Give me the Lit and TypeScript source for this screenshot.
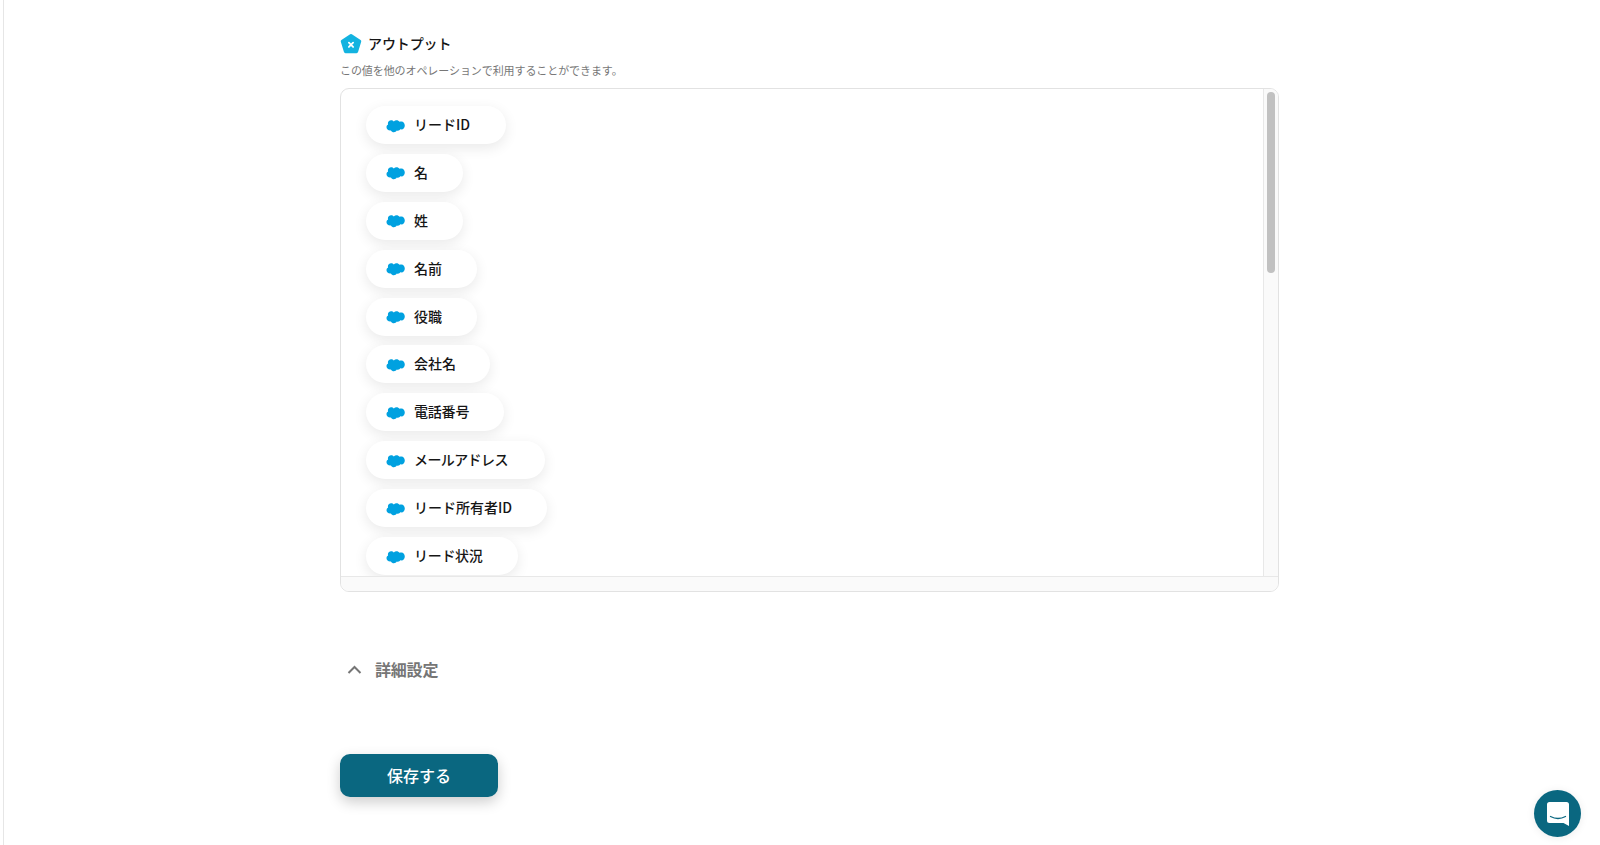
import { LitElement, html, css } from 'lit';
import { customElement } from 'lit/decorators.js';

const outputs: { label: string; width: number; spacing?: number }[] = [
  { label: 'リードID', width: 140 },
  { label: '名', width: 97 },
  { label: '姓', width: 97 },
  { label: '名前', width: 111 },
  { label: '役職', width: 111 },
  { label: '会社名', width: 124 },
  { label: '電話番号', width: 138, spacing: -0.2 },
  { label: 'メールアドレス', width: 179, spacing: -0.6 },
  { label: 'リード所有者ID', width: 181 },
  { label: 'リード状況', width: 152, spacing: -0.3 },
];

const cloud = html`<svg class="cloud" viewBox="0 0 19 14" aria-hidden="true">
  <path fill="#00a1e0" d="M7.800 2.400C8.500 1.600 9.500 1.200 10.500 1.200c1.300 0 2.400.6 3.100 1.600.6-.2 1.200-.4 1.800-.4 2 0 3.400 1.800 3.400 4s-1.400 4-3.400 4c-.3 0-.7 0-1-.1-.5.900-1.500 1.400-2.500 1.400-.4 0-.8-.1-1.100-.2-.6 1-1.700 1.700-2.900 1.700-1.300 0-2.400-.7-3-1.800-.3.100-.5.100-.8.100C2.100 11.500.5 10.200.5 8.300c0-1.200.6-2.200 1.600-2.700-.1-.4-.2-.8-.2-1.200C1.900 2.600 3.300 1.300 5.100 1.300c1.100 0 2.100.4 2.700 1.100z"/>
</svg>`;

@customElement('app-root')
export class AppRoot extends LitElement {
  static styles = css`
    :host {
      display: block;
      height: 845px;
      overflow: hidden;
      background: #fff;
      font-family: 'Noto Sans CJK JP', 'Noto Sans', sans-serif;
      color: #161616;
    }

    .page {
      box-sizing: border-box;
      height: 845px;
      margin-left: 3px;
      border-left: 1px solid #e6e6e6;
      padding: 32px 0 0 336px;
    }

    .heading {
      display: flex;
      align-items: center;
      gap: 6px;
      height: 22px;
      font-size: 14px;
      font-weight: 500;
      line-height: 22px;
    }

    .heading span {
      margin-top: -1px;
      letter-spacing: -0.1px;
    }

    .logo {
      width: 22px;
      height: 22px;
      display: block;
      margin-top: 2px;
    }

    .note {
      margin: 7px 0 9px;
      font-size: 11px;
      line-height: 18px;
      letter-spacing: -0.08px;
      color: #777;
    }

    .box {
      box-sizing: border-box;
      width: 939px;
      height: 504px;
      display: grid;
      grid-template-columns: 1fr 15px;
      grid-template-rows: 1fr 15px;
      border: 1px solid #e2e2e2;
      border-radius: 9px;
      overflow: hidden;
    }

    .list {
      overflow: hidden;
      padding: 17px 25px 0;
      display: flex;
      flex-direction: column;
      gap: 9.9px;
    }

    .chip {
      box-sizing: border-box;
      flex: none;
      height: 38px;
      display: flex;
      align-items: center;
      gap: 9px;
      padding-left: 20px;
      border-radius: 19px;
      background: #fff;
      box-shadow: 0 4px 14px rgba(0, 0, 0, 0.09);
      font-size: 14px;
      font-weight: 500;
      white-space: nowrap;
    }

    .chip span {
      margin-top: -2px;
    }

    .cloud {
      width: 19px;
      height: 14px;
      display: block;
      flex: none;
      margin-top: 1px;
    }

    .track-y {
      background: #fafafa;
      border-left: 1px solid #e8e8e8;
      padding: 3px 3px 0 3px;
    }

    .thumb {
      height: 181px;
      border-radius: 4px;
      background: #c1c1c1;
    }

    .track-x {
      grid-column: 1 / 3;
      background: #fafafa;
      border-top: 1px solid #e8e8e8;
    }

    .details {
      display: flex;
      align-items: center;
      gap: 13px;
      height: 24px;
      margin: 66px 0 0 7px;
      font-size: 16px;
      font-weight: 700;
      color: #767676;
    }

    .details span {
      margin-top: -2px;
      letter-spacing: -0.2px;
    }

    .chevron {
      width: 15px;
      height: 10px;
      display: block;
    }

    .save {
      display: block;
      width: 158px;
      height: 43px;
      margin-top: 72px;
      padding: 0 0 2px;
      border: none;
      border-radius: 10px;
      background: #0a6780;
      box-shadow: 0 5px 14px rgba(0, 0, 0, 0.2);
      color: #fff;
      font: 500 16px 'Noto Sans CJK JP', 'Noto Sans', sans-serif;
    }

    /* launcher floats over the page */
    .launcher {
      position: fixed;
      right: 19px;
      bottom: 8px;
      width: 47px;
      height: 47px;
      display: flex;
      align-items: center;
      justify-content: center;
      border-radius: 50%;
      background: #0a6780;
      box-shadow: 0 1px 8px rgba(0, 0, 0, 0.08);
    }

    .launcher svg {
      width: 24px;
      height: 26px;
      display: block;
    }
  `;

  render() {
    return html`
      <div class="page">
        <div class="heading">
          <svg class="logo" viewBox="0 0 21 21" aria-hidden="true">
            <path fill="#13b3e0" stroke="#13b3e0" stroke-width="3" stroke-linejoin="round" d="M10.500 2.500 18.800 8 15.800 17.800H5.200L2.200 8z"/>
            <path stroke="#fff" stroke-width="1.700" stroke-linecap="round" d="M8.500 9.300l4 4M12.500 9.300l-4 4"/>
          </svg>
          <span>アウトプット</span>
        </div>
        <div class="note">この値を他のオペレーションで利用することができます。</div>
        <div class="box">
          <div class="list">
            ${outputs.map(
              (o) => html`<div class="chip" style="width: ${o.width}px">
                ${cloud}<span style="letter-spacing: ${o.spacing ?? 0}px">${o.label}</span>
              </div>`
            )}
          </div>
          <div class="track-y"><div class="thumb"></div></div>
          <div class="track-x"></div>
        </div>
        <div class="details">
          <svg class="chevron" viewBox="0 0 15 10" aria-hidden="true">
            <path fill="none" stroke="#767676" stroke-width="2" d="M1.500 8 7.500 2l6 6"/>
          </svg>
          <span>詳細設定</span>
        </div>
        <button class="save">保存する</button>
      </div>
      <div class="launcher">
        <svg viewBox="0 0 24 26" aria-hidden="true">
          <path fill="#fff" d="M3.500 1h17A2.500 2.500 0 0 1 23 3.500V25l-5.500-3h-14A2.500 2.500 0 0 1 1 19.500v-16A2.500 2.500 0 0 1 3.500 1z"/>
          <path fill="none" stroke="#0a6780" stroke-width="1.300" stroke-linecap="round" d="M4.500 15.500c4.500 2.400 10.500 2.400 15 0"/>
        </svg>
      </div>
    `;
  }
}
